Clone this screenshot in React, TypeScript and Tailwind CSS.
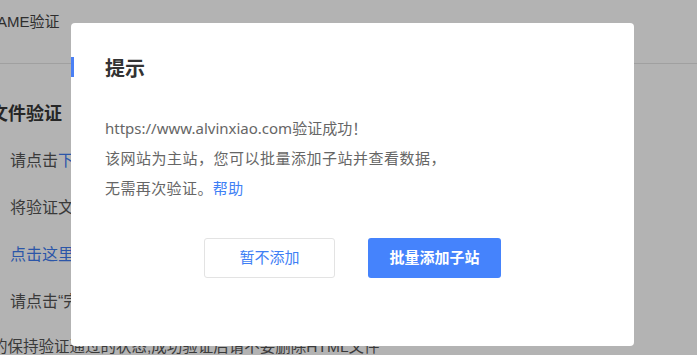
import React from "react";

export default function App() {
  const font = { fontFamily: '"Liberation Sans", "Noto Sans CJK SC", sans-serif' };
  const bodyFont = { fontFamily: '"Noto Sans", "Noto Sans CJK SC", sans-serif' };
  return (
    <div className="relative w-[697px] h-[355px] overflow-hidden bg-[#b3b3b3]" style={font}>
      {/* background page (dimmed) */}
      <div className="flex flex-col text-[#2e2e2e]">
        <div className="h-[63px] flex items-start pt-[11px] text-[15px] leading-[22px] -ml-[3px]">AME验证</div>
        <div className="h-px bg-[#a0a0a0] w-full" />
        <div className="pt-[38px] -ml-[10px] text-[18px] font-bold leading-[24px] text-[#262626]">文件验证</div>
        <div className="pl-[10px] pt-[24px] text-[16px] leading-[22px] text-[#3a3a3a]">
          请点击<span className="text-[#2c56a8]">下</span>
        </div>
        <div className="pl-[10px] pt-[25px] text-[16px] leading-[22px] text-[#3a3a3a]">将验证文</div>
        <div className="pl-[10px] pt-[25px] text-[16px] leading-[22px] text-[#2c56a8]">点击这里</div>
        <div className="pl-[10px] pt-[25px] text-[16px] leading-[22px] text-[#3a3a3a]">请点击“完</div>
        <div className="-ml-[8px] pt-[23px] text-[15.5px] leading-[22px] text-[#3a3a3a] whitespace-nowrap">
          的保持验证通过的状态,成功验证后请不要删除HTML文件
        </div>
      </div>

      {/* modal */}
      <div className="absolute left-[71px] top-[23px] w-[563px] h-[323px] bg-white rounded-[4px] px-[34px] pt-[34px]">
        <div className="text-[20px] leading-[24px] font-bold text-[#333333]">提示</div>
        <div className="mt-[32px] text-[15px] leading-[30px] text-[#666666]" style={bodyFont}>
          <div>https://www.alvinxiao.com验证成功！</div>
          <div className="tracking-[0.5px]">该网站为主站，您可以批量添加子站并查看数据，</div>
          <div className="tracking-[0.4px]">
            无需再次验证。<span className="text-[#3f7ff5]">帮助</span>
          </div>
        </div>
        <div className="mt-[35px] flex justify-center gap-[33px]">
          <button className="w-[131px] h-[40px] border border-[#e3e3e3] rounded-[3px] bg-white text-[15px] text-[#3f7ff5]">
            暂不添加
          </button>
          <button className="w-[133px] h-[40px] rounded-[3px] bg-[#4583fc] text-[15px] font-bold text-white">
            批量添加子站
          </button>
        </div>
      </div>

      {/* active tab indicator over modal edge */}
      <div className="absolute left-[71px] top-[57px] w-[3px] h-[20px] bg-[#4a80f5]" />
    </div>
  );
}
